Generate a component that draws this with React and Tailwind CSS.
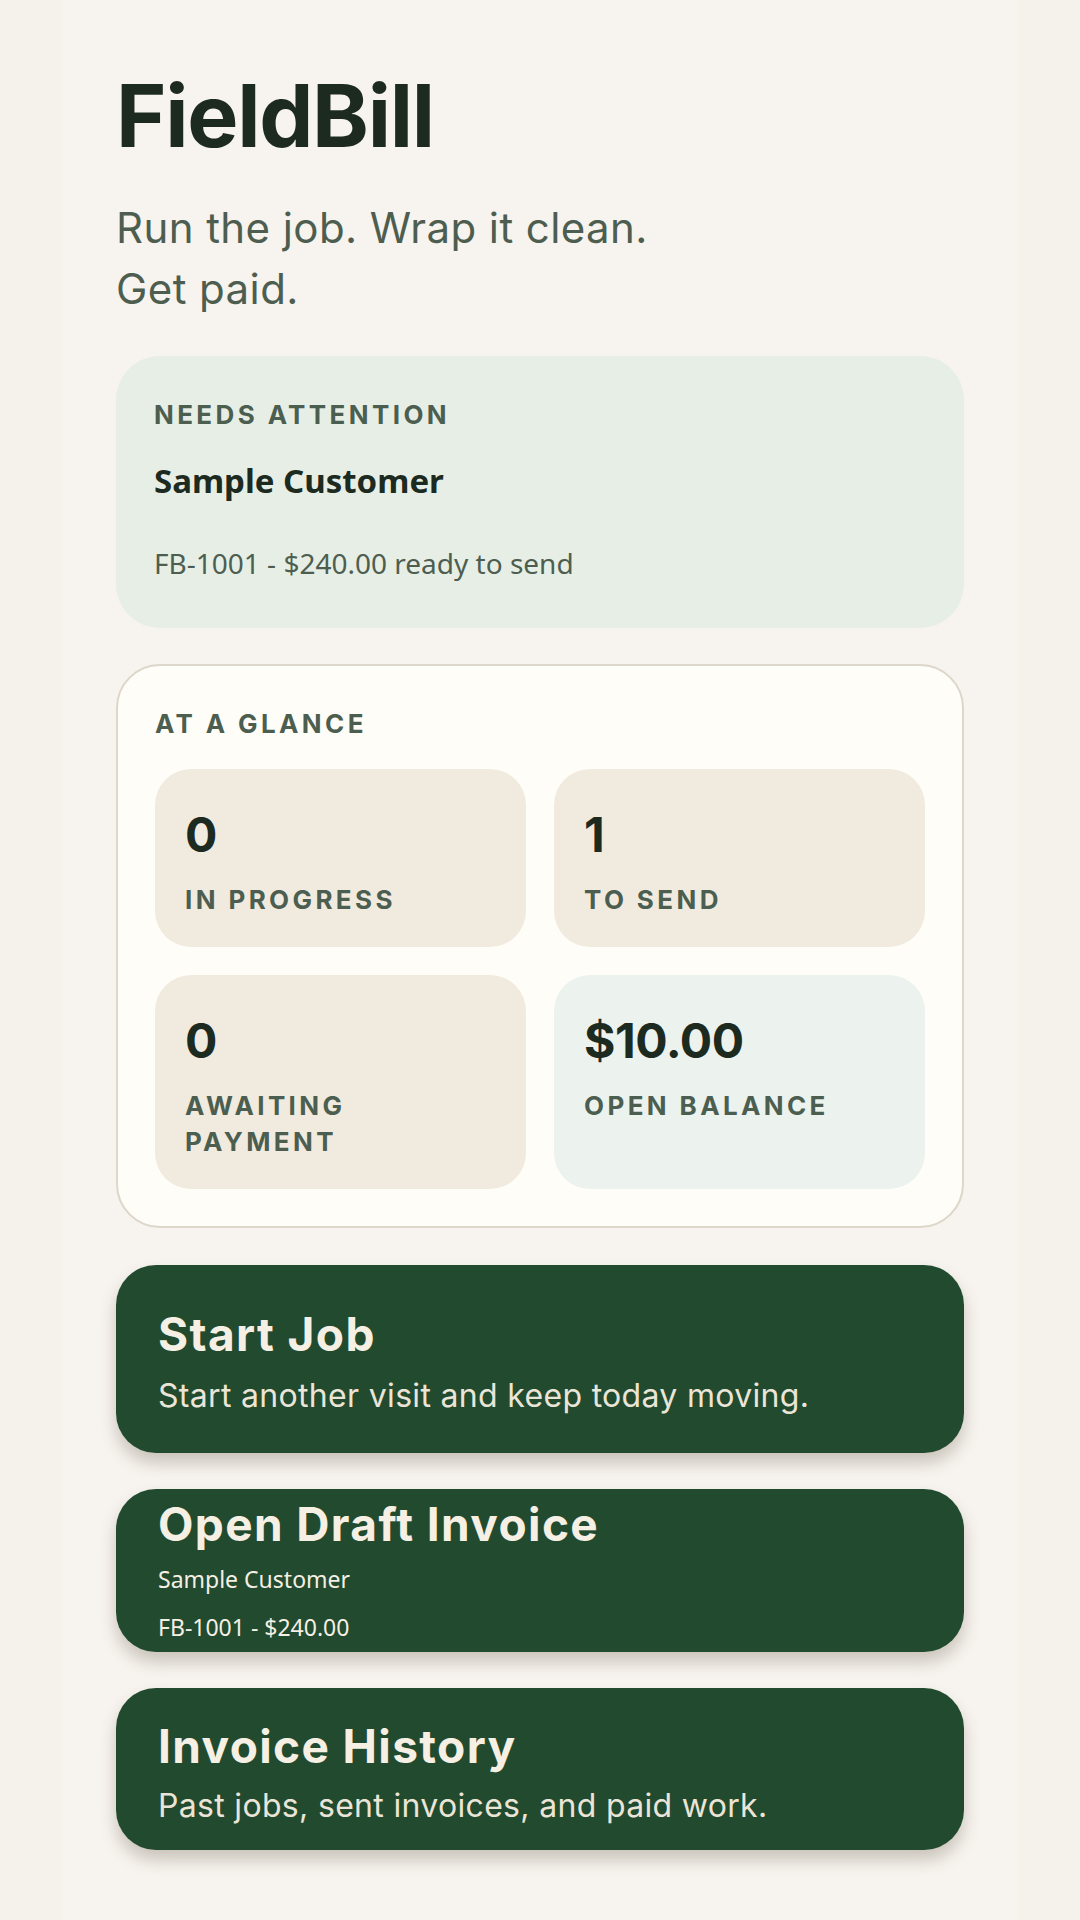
import React from "react";

function Label({ children, className = "" }) {
  return (
    <div
      className={`font-['Inter',sans-serif] text-[26px] font-bold uppercase tracking-[0.13em] text-[#4b5e4f] ${className}`}
    >
      {children}
    </div>
  );
}

function Tile({ value, label, mint }) {
  return (
    <div
      className={`rounded-[36px] pt-[37px] pb-[29px] pl-[30px] pr-[40px] ${
        mint ? "bg-[#ecf2ee]" : "bg-[#f1eadf]"
      }`}
    >
      <div className="font-['Inter',sans-serif] text-[48px] leading-[58px] font-bold tracking-[-0.01em] text-[#1c2a1f]">
        {value}
      </div>
      <Label className="mt-[18px] leading-[36px]">{label}</Label>
    </div>
  );
}

function ActionCard({ className, children }) {
  return (
    <button
      className={`block w-full rounded-[40px] bg-[#214a2f] px-[42px] text-left shadow-[0_10px_16px_rgba(70,60,40,0.25)] ${className}`}
    >
      {children}
    </button>
  );
}

function ActionTitle({ children }) {
  return (
    <div className="font-['Inter',sans-serif] text-[46px] leading-[54px] font-bold tracking-[0.03em] text-[#f5efe4]">
      {children}
    </div>
  );
}

function ActionText({ children, className = "" }) {
  return (
    <div
      className={`font-['Inter',sans-serif] text-[32px] leading-[42px] tracking-[0.01em] text-[#ebe5d8] ${className}`}
    >
      {children}
    </div>
  );
}

export default function App() {
  return (
    <div className="min-h-screen w-full bg-[#f5f1eb]">
      <div className="mx-auto min-h-screen max-w-[956px] bg-[#f7f3ee] px-[54px] pt-[73px] pb-[72px]">
        <h1 className="font-['Inter',sans-serif] text-[86px] leading-none font-bold tracking-[-0.015em] text-[#1c2a1f]">
          FieldBill
        </h1>
        <p className="mt-[38px] max-w-[570px] font-['Inter',sans-serif] text-[42px] leading-[61px] font-normal tracking-[0.01em] text-[#4d5e50]">
          Run the job. Wrap it clean. Get paid.
        </p>

        <div className="mt-[37px] rounded-[44px] bg-[#e7eee6] px-[38px] pt-[44px] pb-[45px]">
          <Label className="leading-[30px]">Needs Attention</Label>
          <div className="mt-[29px] font-['Noto_Sans',sans-serif] text-[33px] leading-[44px] font-bold text-[#1c2a1f]">
            Sample Customer
          </div>
          <div className="mt-[40px] font-['Noto_Sans',sans-serif] text-[28px] leading-[40px] text-[#4d5e50]">
            FB-1001 - $240.00 ready to send
          </div>
        </div>

        <div className="mt-[36px] rounded-[44px] border-2 border-[#ddd6ca] bg-[#fffdf8] px-[37px] pt-[43px] pb-[37px]">
          <Label className="leading-[30px]">At a Glance</Label>
          <div className="mt-[30px] grid grid-cols-2 gap-[28px]">
            <Tile value="0" label="In Progress" />
            <Tile value="1" label="To Send" />
            <Tile value="0" label="Awaiting Payment" />
            <Tile value="$10.00" label="Open Balance" mint />
          </div>
        </div>

        <div className="mt-[37px] flex flex-col gap-[36px]">
          <ActionCard className="pt-[42px] pb-[36px]">
            <ActionTitle>Start Job</ActionTitle>
            <ActionText className="mt-[14px]">Start another visit and keep today moving.</ActionText>
          </ActionCard>

          <ActionCard className="pt-[8px] pb-[5px]">
            <ActionTitle>Open Draft Invoice</ActionTitle>
            <div className="mt-[8px] font-['Noto_Sans',sans-serif] text-[23px] leading-[40px] text-[#f5efe4]">
              Sample Customer
            </div>
            <div className="mt-[8px] font-['Noto_Sans',sans-serif] text-[23px] leading-[40px] text-[#f5efe4]">
              FB-1001 - $240.00
            </div>
          </ActionCard>

          <ActionCard className="pt-[31px] pb-[23px]">
            <ActionTitle>Invoice History</ActionTitle>
            <ActionText className="mt-[12px]">Past jobs, sent invoices, and paid work.</ActionText>
          </ActionCard>
        </div>
      </div>
    </div>
  );
}
